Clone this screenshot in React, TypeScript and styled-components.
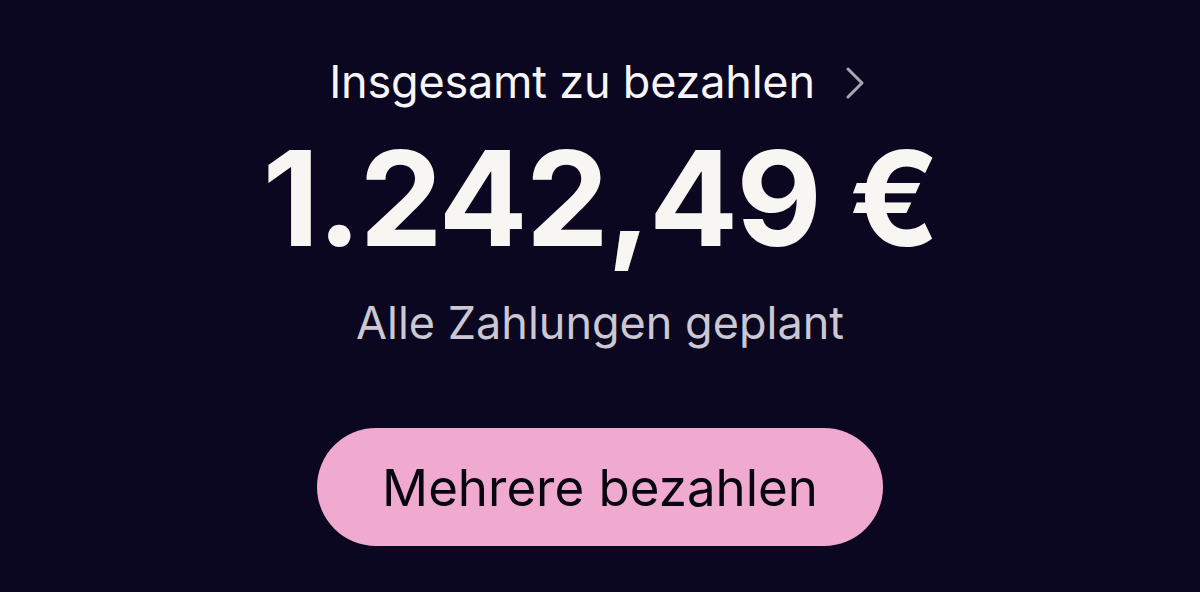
import React from 'react';
import styled, { createGlobalStyle } from 'styled-components';

const GlobalStyle = createGlobalStyle`
  html, body {
    margin: 0;
    padding: 0;
    background: #0b0720;
  }
  body {
    font-family: Inter, "Noto Sans", sans-serif;
  }
`;

export default function App() {
  return (
    <>
      <GlobalStyle />
      <UIScreen>
        <UITotalLink type="button">
          <span>Insgesamt zu bezahlen</span>
          <Chevron />
        </UITotalLink>
        <UIAmount>1.242,49 €</UIAmount>
        <UIStatus>Alle Zahlungen geplant</UIStatus>
        <UIPayButton type="button">Mehrere bezahlen</UIPayButton>
      </UIScreen>
    </>
  );
}

function Chevron() {
  return (
    <UIChevron width="20" height="32" viewBox="0 0 20 32" fill="none">
      <path
        d="M3 2 L17 16 L3 30"
        stroke="currentColor"
        strokeWidth="3"
        strokeLinecap="round"
        strokeLinejoin="round"
      />
    </UIChevron>
  );
}

const UIScreen = styled.main`
  width: 1200px;
  height: 592px;
  display: flex;
  flex-direction: column;
  align-items: center;
  padding-top: 54px;
  box-sizing: border-box;
  background: #0b0720;
`;

const UITotalLink = styled.button`
  display: flex;
  align-items: center;
  gap: 30px;
  padding: 0 6px 0 0;
  border: none;
  background: none;
  color: #f6f5f8;
  font-family: inherit;
  font-size: 45px;
  font-weight: 400;
  line-height: 56px;
  letter-spacing: -0.2px;
  cursor: pointer;
`;

const UIChevron = styled.svg`
  color: #aaa6b4;
  margin-top: 2px;
`;

const UIAmount = styled.div`
  margin-top: 18px;
  color: #f7f6f3;
  font-size: 132px;
  font-weight: 700;
  line-height: 140px;
  letter-spacing: -2px;
`;

const UIStatus = styled.div`
  margin-top: 27px;
  color: #cbc7d3;
  font-size: 45px;
  font-weight: 400;
  line-height: 56px;
`;

const UIPayButton = styled.button`
  margin-top: 77px;
  width: 566px;
  height: 118px;
  border: none;
  border-radius: 59px;
  background: #f1aacf;
  color: #070410;
  font-family: inherit;
  font-size: 51px;
  font-weight: 400;
  cursor: pointer;
`;
